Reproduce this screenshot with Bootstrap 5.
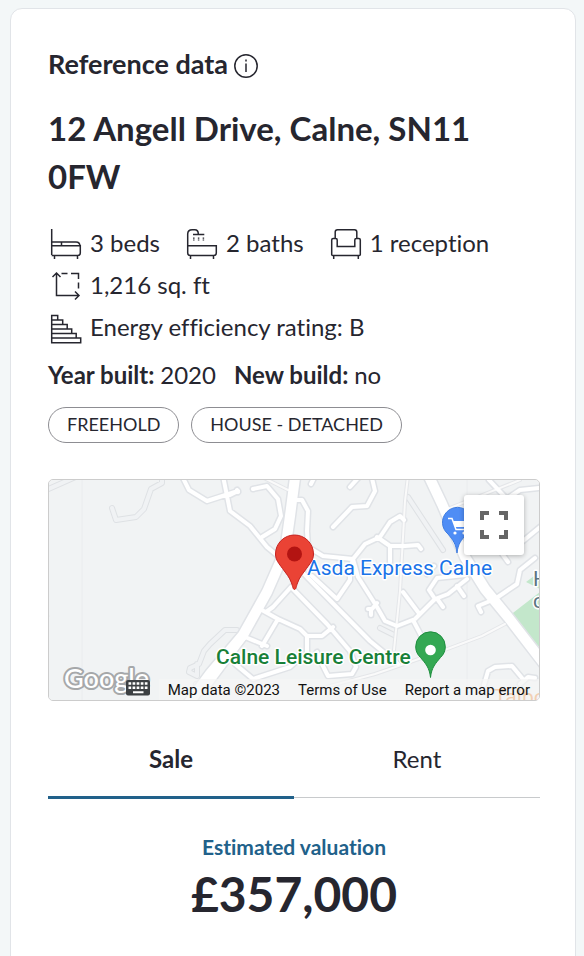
<!DOCTYPE html>
<html lang="en">
<head>
<meta charset="utf-8">
<meta name="viewport" content="width=device-width, initial-scale=1">
<title>12 Angell Drive, Calne</title>
<link href="https://cdn.jsdelivr.net/npm/bootstrap@5.3.0/dist/css/bootstrap.min.css" rel="stylesheet">
<style>
  body { background: #f3f7f8; color: #26262f; font-family: Lato, "Open Sans", sans-serif; font-size: 24px; line-height: 32px; font-variant-ligatures: none; }
  .panel { margin: 8px 8px 0 10px; padding: 39px 35px 48px 37px; border: 1px solid #e1e4e8; border-radius: 12px; min-height: calc(100vh + 24px); }
  .panel-head { column-gap: 6px; }
  .panel-title { font-size: 27px; line-height: 32px; font-weight: 700; }
  .address { font-size: 33px; line-height: 48px; font-weight: 700; margin: 24px 0 27px; }
  .facts { column-gap: 24px; row-gap: 10px; }
  .facts svg, .info-btn svg { display: block; flex: none; }
  .fact-icon { width: 34px; height: 32px; margin-top: 1px; margin-bottom: -1px; fill: none; stroke: #26262f; stroke-width: 1.5; }
  .info-btn { color: inherit; line-height: 1; margin-top: 4px; }
  .built { column-gap: 18px; margin: 16px 0; }
  .built dt { font-weight: 700; }
  .pills { gap: 12px; }
  .pill-tag { border: 1px solid #8d8d92; font-size: 18px; line-height: 32px; padding: 0 18px 2px; }
  .map-box { height: 222px; margin-top: 36px; border: 1px solid #ccc; border-radius: 5px; background: #f1f3f4; font-family: Roboto, Arial, sans-serif; }
  .map-box > svg { display: block; width: 100%; height: 100%; }
  .full-btn { top: 15px; right: 15px; width: 60px; height: 60px; background: #fff; border-radius: 3px; box-shadow: 0 1px 5px rgba(0,0,0,.28); }
  .map-foot { right: 0; bottom: 0; height: 21px; font-size: 15px; line-height: 23px; background: rgba(245,245,245,.7); }
  .map-foot > * { padding: 0 9px; color: #111; text-decoration: none; white-space: nowrap; }
  .key-btn { left: 76px; bottom: 4px; line-height: 0; }
  .tabs { margin-top: 22px; }
  .tabs button { color: inherit; font-size: 24px; line-height: 32px; padding: 20px 0 21px; border-bottom: 3px solid transparent; position: relative; }
  .tabs button::after { content: ""; display: block; position: absolute; left: 0; right: 0; bottom: -2px; height: 1px; background: #c8cacc; }
  .tabs button.active { font-weight: 700; border-bottom-color: #21618a; }
  .tabs button.active::after { display: none; }
  .value-label { color: #21618a; font-size: 21px; line-height: 28px; font-weight: 700; margin-top: 34px; }
  .value-sum { font-size: 48px; line-height: 66px; font-weight: 700; }
</style>
</head>
<body>
<main class="panel bg-white">
  <div class="panel-head d-flex align-items-center">
    <h2 class="panel-title mb-0">Reference data</h2>
    <button class="info-btn btn p-0 border-0" type="button" aria-label="About reference data">
      <svg width="24" height="24" viewBox="0 0 24 24" fill="none" stroke="#26262f" stroke-width="1.5"><circle cx="12" cy="12" r="11.2"/><path d="M12 9.5V18M12 5.6v2"/></svg>
    </button>
  </div>
  <h1 class="address">12 Angell Drive, Calne, SN11 0FW</h1>

  <ul class="facts list-unstyled d-flex flex-wrap mb-0">
    <li class="d-flex gap-2"><svg class="fact-icon" viewBox="0 0 34 32"><path d="M3.7 1v26M3.7 14H28q4 0 4 4.500M13.500 14v3.500M3.700 17.700H32.300V25q0 2.500-2.500 2.500H3.700M6.500 27.500v3.500M29.500 27.500v3.500"/></svg><span>3 beds</span></li>
    <li class="d-flex gap-2"><svg class="fact-icon" viewBox="0 0 34 32"><path d="M3.700 18V6q0-4.300 4.500-4.300h2.600q3.500 0 3.500 4.300M9 6.500h11.300M3.700 17.700H32.300V25q0 2.500-2.500 2.500H6.200q-2.500 0-2.500-2.500zM6.500 27.500v3.500M29.500 27.500v3.500"/><path d="M9.800 9.500v3M14.600 9.500v3M19.400 9.500v3" stroke-dasharray="1.300 .8"/></svg><span>2 baths</span></li>
    <li class="d-flex gap-2"><svg class="fact-icon" viewBox="0 0 34 32"><path d="M7.200 10V4q0-2.300 2.300-2.300h17q2.300 0 2.300 2.300v6M9.200 18.500V12q0-1.500-1.500-1.500H5.200q-1.500 0-1.500 1.500v14.500q0 1 1 1h26.600q1 0 1-1V12q0-1.500-1.500-1.500h-2.500q-1.500 0-1.500 1.500v6.500zM5.700 27.500v3.500M30.300 27.500v3.500"/></svg><span>1 reception</span></li>
    <li class="w-100 d-flex gap-2"><svg class="fact-icon" viewBox="0 0 34 32"><path d="M8.500 3v22.500h22.500M4.500 7l4-4 4 4M27 21.500l4 4-4 4M13.500 3.500h6M23 3.500h7.500V9M30.500 12.500v6"/></svg><span>1,216 sq. ft</span></li>
    <li class="w-100 d-flex gap-2"><svg class="fact-icon" viewBox="0 0 34 32"><path d="M3.700 3.500h6v4.400h5v4.500h4.500v4.500h4.500v4.500h4.500V26h4.500v4.800H3.700zM3.700 7.900h7M3.700 12.400h12M3.700 16.900h16M3.700 21.400h21M3.700 26h25"/></svg><span>Energy efficiency rating: B</span></li>
  </ul>

  <dl class="built d-flex flex-wrap">
    <div class="d-flex"><dt>Year built:&nbsp;</dt><dd class="mb-0">2020</dd></div>
    <div class="d-flex"><dt>New build:&nbsp;</dt><dd class="mb-0">no</dd></div>
  </dl>

  <div class="pills d-flex flex-wrap">
    <span class="pill-tag rounded-pill">FREEHOLD</span>
    <span class="pill-tag rounded-pill">HOUSE - DETACHED</span>
  </div>

  <section class="map-box position-relative overflow-hidden" aria-label="Map">
    <svg viewBox="49 480 490 220" preserveAspectRatio="xMidYMid slice">
      <defs>
        <g id="streets" fill="none" stroke-linecap="round" stroke-linejoin="round">
          <path d="M182 476L189 490 207 501 238 491M223 476L230 511 250 526 267 547 278 556M253 489L267 486 278 499 281 516 275 529 262 537M295 500h7L308 511 307 531 308 547M308 547L323 556 353 559 365 544 380 537 390 522 400 516 404 520M371 474L375 491 367 506 352 507 333 527M350 487L359 477M311 484l4-8M291 560L307 577 370 641 398 664M291 587L327 624 350 651 356 667 352 674 328 676 322 664 317 652M291 587L273 607 266 612M260 609L278 619 300 629 307 636H322L333 627M278 619L262 646M307 636V653M353 559L358 577 377 607 385 621 397 626 415 619 435 599 448 594 467 579M368 609h4l5-6M371 610v5M377 537L390 546 405 546 418 545 421 549M390 546v16M403 592L418 612M413 620L424 641M435 599L429 590 437 578 465 575M438 600l5 7M457 586l7 10M481 612L478 606 495 599 517 584 520 570 535 558M508 562L498 548M505 497L489 480M505 500L520 490 540 488M523 541L540 527M484 685L488 671 495 667 512 666 522 678M238 491L230 495M434 566l-7 8M520 684l8-7 7 1M238 492L237 490"/>
          <path d="M353 559L350 570 350 580 337 599 312 576M210 684L245 637 267 646M235 664L253 679 290 667 300 658"/>
        </g>
        <g id="lanes" fill="none" stroke-linecap="round" stroke-linejoin="round">
          <path d="M44 491L80 475M112 508L116 520 136 517 144 509 151 489 162 483V476M237 630H225L210 644 204 651 199 664 190 668 189 672 197 676 197 664M196 684l5 4-5 8M380 628l14 7M408 497L443 550"/>
        </g>
        <g id="thin" fill="none" stroke-linecap="round" stroke-linejoin="round">
          <path d="M262 477L288 490M408 476L405 501 400 591 394 650M505 624L482 636 442 651 375 674 330 686 310 692M445 510L520 480"/>
        </g>
        <g id="mains" fill="none" stroke-linejoin="round">
          <path d="M296 470L290 516 285 551 267 592 243 635 210 674 188 704M424 466L442 504 465 557 485 589 508 617 545 665"/>
        </g>
      </defs>
      <rect x="49" y="480" width="490" height="220" fill="#f1f3f4"/>
      <path d="M82 480v220M467 480v220M49 616h1" stroke="#eaecee"/>
      <path d="M509 616L540 592V648zM526 582l8-6 6 3v10z" fill="#c3e7cb"/>
      <use href="#lanes" stroke="#dee1e4" stroke-width="6"/>
      <use href="#lanes" stroke="#f0f2f4" stroke-width="4"/>
      <use href="#streets" stroke="#e0e3e7" stroke-width="7"/>
      <use href="#thin" stroke="#e4e6e9" stroke-width="4"/>
      <use href="#mains" stroke="#e0e3e7" stroke-width="13"/>
      <use href="#thin" stroke="#fafafa" stroke-width="2"/>
      <use href="#streets" stroke="#fff" stroke-width="4"/>
      <use href="#mains" stroke="#fff" stroke-width="10"/>
      <path d="M457 553c-1-9-4-13-9-19a15 15 0 1 1 19 0c-6 6-9 10-10 19z" fill="#4f8df5" stroke="#3f7de0"/>
      <path d="M448 518.500h4l4 11h11" fill="none" stroke="#fff" stroke-width="1.500"/><path d="M453 521h16l-3 6h-11z" fill="#fff"/><circle cx="455" cy="533" r="1.600" fill="#fff"/><circle cx="464" cy="533" r="1.600" fill="#fff"/>
      <g paint-order="stroke" stroke="#fff" stroke-width="3" stroke-linejoin="round" font-size="21">
        <text x="307" y="575" fill="#1a73e8">Asda Express Calne</text>
        <text x="216" y="664" fill="#188038" font-weight="500">Calne Leisure Centre</text>
        <text x="533" y="586" fill="#5b7480">H</text>
        <text x="533" y="608" fill="#5b7480">c</text>
        <text x="494" y="704" fill="#e87818" stroke="none">Talbot</text>
      </g>
      <path d="M430.500 677.500c-1-10-5-14-10-20a14.800 14.800 0 1 1 20 0c-5 6-9 10-10 20z" fill="#34a853" stroke="#1e8e3e"/>
      <circle cx="430.500" cy="650" r="5.300" fill="#fff"/>
      <path d="M294.500 589.500c-1.600 0-1.700-3-3-6.500-2-6-5.500-9.500-9-14.500-3.500-5-7-8.500-7-14.500a19 19 0 1 1 38 0c0 6-3.500 9.500-7 14.500-3.500 5-7 8.500-9 14.500-1.300 3.500-1.400 6.500-3 6.500z" fill="#ea4335" stroke="#c5221f"/>
      <circle cx="294.500" cy="554" r="7.500" fill="#b31412"/>
      <text x="64" y="688" font-family="Lato, sans-serif" font-size="27" font-weight="500" fill="#fff" stroke="#a6a8aa" stroke-width="4" stroke-linejoin="round" paint-order="stroke">Google</text>
    </svg>
    <button class="full-btn btn p-0 border-0 position-absolute d-flex align-items-center justify-content-center" type="button" aria-label="Toggle fullscreen view">
      <svg width="28" height="28" viewBox="0 0 28 28" fill="none" stroke="#666" stroke-width="4"><path d="M2 9V2h7M19 2h7v7M26 19v7h-7M9 26H2v-7"/></svg>
    </button>
    <div class="map-foot position-absolute d-flex">
      <span>Map data ©2023</span><a href="#terms">Terms of Use</a><a href="#report">Report a map error</a>
    </div>
    <button class="key-btn btn p-0 border-0 position-absolute" type="button" aria-label="Keyboard shortcuts">
      <svg width="26" height="17" viewBox="0 0 26 17"><rect x="1" y="1" width="24" height="15.500" rx="2" fill="#3c4043"/><path d="M3.500 4.500h19M3.500 8.800h19" stroke="#fff" stroke-width="2.600" stroke-dasharray="2.700 1.375"/><path d="M8 13.200h10.500" stroke="#fff" stroke-width="2"/></svg>
    </button>
  </section>

  <div class="tabs d-flex" role="tablist">
    <button class="active bg-transparent border-top-0 border-start-0 border-end-0 flex-fill w-50" type="button" role="tab" aria-selected="true">Sale</button>
    <button class="bg-transparent border-top-0 border-start-0 border-end-0 flex-fill w-50" type="button" role="tab" aria-selected="false">Rent</button>
  </div>
  <div class="text-center">
    <div class="value-label">Estimated valuation</div>
    <div class="value-sum">£357,000</div>
  </div>
</main>
<script src="https://cdn.jsdelivr.net/npm/bootstrap@5.3.0/dist/js/bootstrap.bundle.min.js"></script>
</body>
</html>
